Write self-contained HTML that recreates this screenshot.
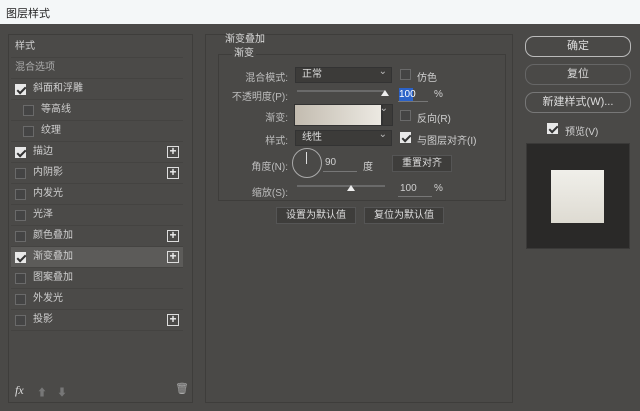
<!DOCTYPE html><html><head><meta charset="utf-8"><style>
*{margin:0;padding:0;box-sizing:border-box}
body{width:640px;height:411px;background:#4a4947;font-family:"Liberation Sans","Noto Sans CJK SC",sans-serif;font-size:10px;color:#d0d0d0;position:relative;overflow:hidden}
.a{position:absolute}
.title{left:0;top:0;width:640px;height:24px;background:#f4f7f8;color:#222;font-size:11px;padding:5px 6px}
.lp{left:8px;top:34px;width:185px;height:369px;border:1px solid #3e3d3b;background:#4b4a48}
.sb{left:182px;top:35px;width:10px;height:367px;background:#454442}
.row{position:absolute;left:2px;width:172px;height:21px;border-bottom:1px solid #444341;line-height:20px;color:#cfcfcf}
.cb{position:absolute;width:11px;height:11px;border:1px solid #6a6a6a;background:#444}
.ck{background:#e8e8e8;border-color:#e8e8e8}
.ck:after{content:"";position:absolute;left:3px;top:0px;width:3px;height:7px;border:solid #333;border-width:0 2px 2px 0;transform:rotate(45deg)}
.plus{position:absolute;left:156px;top:4px;width:12px;height:12px;border:1px solid #ddd;color:#eee;font-size:12px;line-height:9px;text-align:center;font-weight:bold}
.mp{left:205px;top:34px;width:308px;height:369px;border:1px solid #3e3d3b}
.sel{background:#3c3b39;border:1px solid #333;height:16px;color:#ddd;padding-left:6px;line-height:14px}
.sel:after{content:"⌄";position:absolute;right:4px;top:-3px;color:#bbb}
.lbl{text-align:right;color:#bdbdbd}
.btn{border:1px solid #8a8a8a;border-radius:9px;height:21px;text-align:center;line-height:19px;color:#ddd;font-size:11px}
.pb{background:#3e3d3b;border:1px solid #555;height:17px;text-align:center;line-height:15px;color:#ddd}
</style></head><body>
<div class="a title">图层样式</div>
<div class="a lp">
<div class="row" style="top:2px;padding-left:4px">样式</div>
<div class="row" style="top:23px;padding-left:4px;color:#aaa">混合选项</div>
<div class="row" style="top:44px"><span class="cb ck" style="left:4px;top:5px"></span><span style="margin-left:22px">斜面和浮雕</span></div>
<div class="row" style="top:65px"><span class="cb" style="left:12px;top:5px"></span><span style="margin-left:30px">等高线</span></div>
<div class="row" style="top:86px"><span class="cb" style="left:12px;top:5px"></span><span style="margin-left:30px">纹理</span></div>
<div class="row" style="top:107px"><span class="cb ck" style="left:4px;top:5px"></span><span style="margin-left:22px">描边</span><span class="plus">+</span></div>
<div class="row" style="top:128px"><span class="cb" style="left:4px;top:5px"></span><span style="margin-left:22px">内阴影</span><span class="plus">+</span></div>
<div class="row" style="top:149px"><span class="cb" style="left:4px;top:5px"></span><span style="margin-left:22px">内发光</span></div>
<div class="row" style="top:170px"><span class="cb" style="left:4px;top:5px"></span><span style="margin-left:22px">光泽</span></div>
<div class="row" style="top:191px"><span class="cb" style="left:4px;top:5px"></span><span style="margin-left:22px">颜色叠加</span><span class="plus">+</span></div>
<div class="row" style="top:212px;background:#5c5b59"><span class="cb ck" style="left:4px;top:5px"></span><span style="margin-left:22px">渐变叠加</span><span class="plus">+</span></div>
<div class="row" style="top:233px"><span class="cb" style="left:4px;top:5px"></span><span style="margin-left:22px">图案叠加</span></div>
<div class="row" style="top:254px"><span class="cb" style="left:4px;top:5px"></span><span style="margin-left:22px">外发光</span></div>
<div class="row" style="top:275px"><span class="cb" style="left:4px;top:5px"></span><span style="margin-left:22px">投影</span><span class="plus">+</span></div>
<div class="a" style="left:6px;top:348px;font-style:italic;color:#ddd;font-family:'Liberation Serif',serif;font-size:12px">fx</div>
<div class="a" style="left:28px;top:349px;color:#777;font-size:10px">⬆</div>
<div class="a" style="left:48px;top:349px;color:#777;font-size:10px">⬇</div>
<div class="a" style="left:166px;top:347px;color:#aaa;font-size:11px">🗑</div>
</div>
<div class="a mp"></div>
<div class="a" style="left:225px;top:30px;color:#ddd">渐变叠加</div>
<div class="a" style="left:218px;top:54px;width:288px;height:147px;border:1px solid #3e3d3b"></div>
<div class="a" style="left:232px;top:44px;color:#ddd;background:#4a4947;padding:0 2px">渐变</div>
<div class="a lbl" style="left:218px;top:69px;width:70px">混合模式:</div>
<div class="a sel" style="left:295px;top:67px;width:97px">正常</div>
<div class="a cb" style="left:400px;top:69px"></div><div class="a" style="left:417px;top:69px">仿色</div>
<div class="a lbl" style="left:218px;top:88px;width:70px">不透明度(P):</div>
<div class="a" style="left:297px;top:90px;width:88px;height:2px;background:#6a6a6a"></div>
<div class="a" style="left:381px;top:90px;width:0;height:0;border:4px solid transparent;border-bottom:6px solid #eee;border-top:0"></div>
<div class="a" style="left:399px;top:88px;width:14px;background:#2b62c8;color:#fff;line-height:13px">100</div>
<div class="a" style="left:398px;top:101px;width:30px;height:1px;background:#777"></div>
<div class="a" style="left:434px;top:89px">%</div>
<div class="a lbl" style="left:218px;top:109px;width:70px">渐变:</div>
<div class="a" style="left:294px;top:104px;width:88px;height:22px;background:linear-gradient(90deg,#c3bcb0,#ece9e2);border:1px solid #333"></div>
<div class="a sel" style="left:382px;top:104px;width:11px;height:22px;padding:0"></div>
<div class="a cb" style="left:400px;top:110px"></div><div class="a" style="left:417px;top:110px">反向(R)</div>
<div class="a lbl" style="left:218px;top:132px;width:70px">样式:</div>
<div class="a sel" style="left:295px;top:130px;width:97px">线性</div>
<div class="a cb ck" style="left:400px;top:132px"></div><div class="a" style="left:417px;top:132px">与图层对齐(I)</div>
<div class="a lbl" style="left:218px;top:158px;width:70px">角度(N):</div>
<div class="a" style="left:292px;top:148px;width:30px;height:30px;border:1px solid #aaa;border-radius:50%"></div>
<div class="a" style="left:306px;top:152px;width:1px;height:12px;background:#ddd"></div>
<div class="a" style="left:325px;top:157px">90</div>
<div class="a" style="left:323px;top:171px;width:34px;height:1px;background:#777"></div>
<div class="a" style="left:363px;top:158px">度</div>
<div class="a pb" style="left:392px;top:155px;width:60px">重置对齐</div>
<div class="a lbl" style="left:218px;top:184px;width:70px">缩放(S):</div>
<div class="a" style="left:297px;top:185px;width:88px;height:2px;background:#6a6a6a"></div>
<div class="a" style="left:347px;top:185px;width:0;height:0;border:4px solid transparent;border-bottom:6px solid #eee;border-top:0"></div>
<div class="a" style="left:400px;top:183px">100</div>
<div class="a" style="left:398px;top:196px;width:34px;height:1px;background:#777"></div>
<div class="a" style="left:434px;top:183px">%</div>
<div class="a pb" style="left:276px;top:207px;width:80px">设置为默认值</div>
<div class="a pb" style="left:364px;top:207px;width:80px">复位为默认值</div>
<div class="a btn" style="left:525px;top:36px;width:106px;border-color:#bbb">确定</div>
<div class="a btn" style="left:525px;top:64px;width:106px;border-color:#666">复位</div>
<div class="a btn" style="left:525px;top:92px;width:106px;border-color:#777">新建样式(W)...</div>
<div class="a cb ck" style="left:547px;top:123px"></div><div class="a" style="left:565px;top:123px">预览(V)</div>
<div class="a" style="left:526px;top:143px;width:104px;height:106px;background:#2a2928;border:1px solid #3a3938"></div>
<div class="a" style="left:551px;top:170px;width:53px;height:53px;background:linear-gradient(#f0efea,#dedbd2)"></div>
</body></html>
